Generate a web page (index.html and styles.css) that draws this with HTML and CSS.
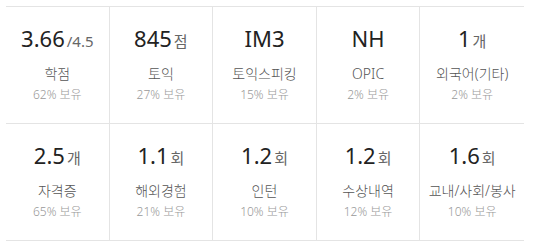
FILE: index.html
```html
<!DOCTYPE html>
<html lang="ko">
<head>
<meta charset="utf-8">
<link rel="stylesheet" href="styles.css">
</head>
<body>
<div class="stats">
  <div class="cell"><div class="value"><span class="num">3.66</span><span class="unit">/4.5</span></div><div class="label">학점</div><div class="pct">62% 보유</div></div>
  <div class="cell"><div class="value"><span class="num">845</span><span class="unit">점</span></div><div class="label">토익</div><div class="pct">27% 보유</div></div>
  <div class="cell"><div class="value"><span class="num">IM3</span></div><div class="label">토익스피킹</div><div class="pct">15% 보유</div></div>
  <div class="cell"><div class="value"><span class="num">NH</span></div><div class="label">OPIC</div><div class="pct">2% 보유</div></div>
  <div class="cell"><div class="value"><span class="num">1</span><span class="unit">개</span></div><div class="label">외국어(기타)</div><div class="pct">2% 보유</div></div>
  <div class="cell"><div class="value"><span class="num">2.5</span><span class="unit">개</span></div><div class="label">자격증</div><div class="pct">65% 보유</div></div>
  <div class="cell"><div class="value"><span class="num">1.1</span><span class="unit">회</span></div><div class="label">해외경험</div><div class="pct">21% 보유</div></div>
  <div class="cell"><div class="value"><span class="num">1.2</span><span class="unit">회</span></div><div class="label">인턴</div><div class="pct">10% 보유</div></div>
  <div class="cell"><div class="value"><span class="num">1.2</span><span class="unit">회</span></div><div class="label">수상내역</div><div class="pct">12% 보유</div></div>
  <div class="cell"><div class="value"><span class="num">1.6</span><span class="unit">회</span></div><div class="label">교내/사회/봉사</div><div class="pct">10% 보유</div></div>
</div>
</body>
</html>
```
FILE: styles.css
```css
html, body {
  margin: 0;
  background: #fff;
}
body {
  padding: 6px 11px 0 6px;
  font-family: "Noto Sans", "Noto Sans CJK KR", sans-serif;
}
.stats {
  display: grid;
  grid-template-columns: repeat(5, 1fr);
  border-top: 1px solid #e4e4e4;
}
.cell {
  height: 101px;
  padding-top: 15px;
  border-bottom: 1px solid #e4e4e4;
  border-right: 1px solid #e4e4e4;
  display: flex;
  flex-direction: column;
  align-items: center;
}
.cell:nth-child(5n) {
  border-right: none;
}
.value {
  display: flex;
  align-items: baseline;
  line-height: 32px;
  height: 32px;
}
.num {
  font-size: 22px;
  color: #222;
}
.unit {
  font-size: 15px;
  color: #666;
  margin-left: 2px;
}
.label {
  margin-top: 11px;
  font-size: 14px;
  line-height: 18px;
  color: #555;
  font-weight: 300;
}
.pct {
  margin-top: 4px;
  font-size: 12px;
  line-height: 16px;
  color: #999;
  font-weight: 300;
}
```
